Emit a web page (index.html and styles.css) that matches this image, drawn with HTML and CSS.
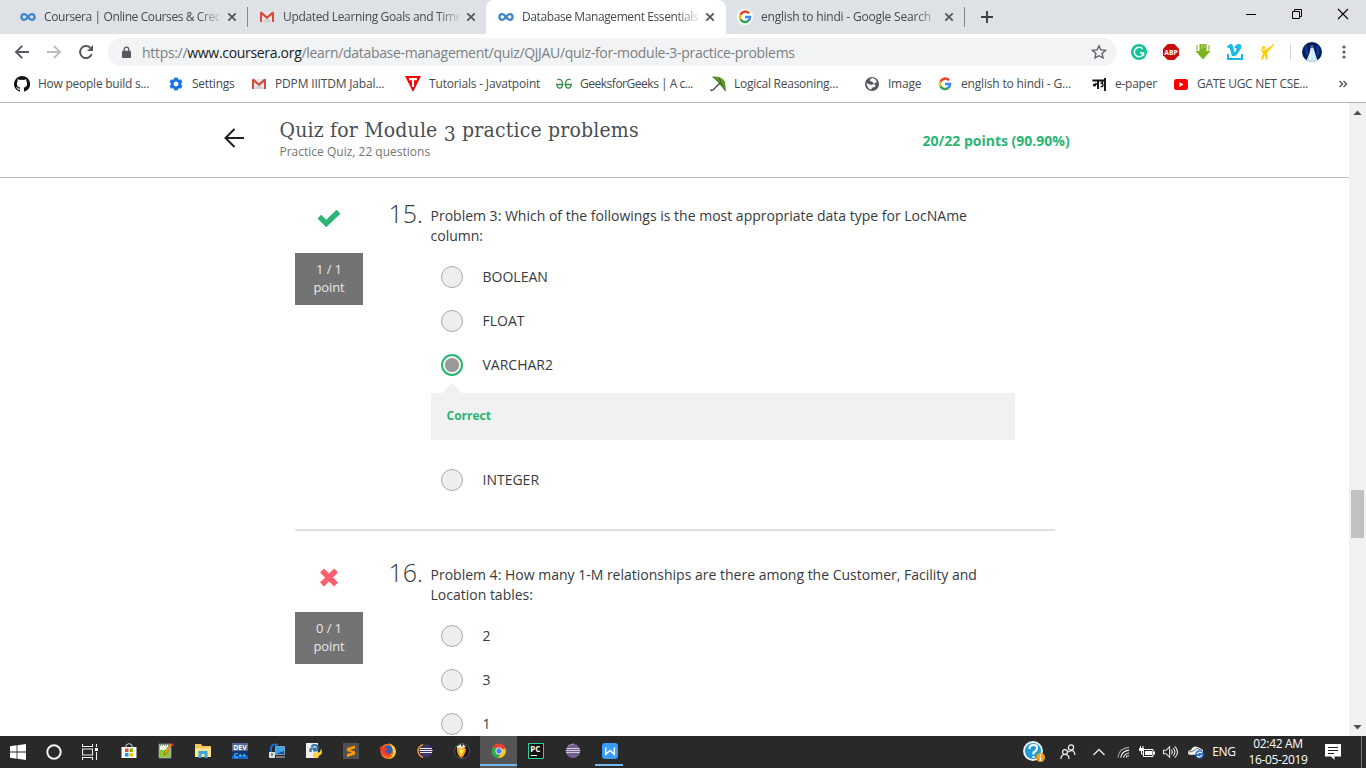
FILE: index.html
```html
<!DOCTYPE html>
<html lang="en">
<head>
<meta charset="utf-8">
<title>Database Management Essentials</title>
<link rel="stylesheet" href="styles.css">
</head>
<body>
<svg class="defs" width="0" height="0">
  <symbol id="coursera" viewBox="0 0 16 16"><path d="M8 8C6.600 6 5.700 5.200 4.200 5.200a2.800 2.800 0 0 0 0 5.600C5.700 10.800 6.600 10 8 8s2.300-2.800 3.800-2.800a2.800 2.800 0 0 1 0 5.600C10.300 10.800 9.400 10 8 8z" fill="none" stroke="#3f87c8" stroke-width="2.300"/></symbol>
  <symbol id="gmail" viewBox="0 0 16 16"><path d="M2 3h12v10H2z" fill="#e9e9e9"/><path d="M3 13l5-5 5 5z" fill="#d2d2d2"/><path d="M1 3.500V13h2V6l5 4 5-4v7h2V3.500L13.500 2.500 8 7.200 2.500 2.500z" fill="#d54b3d"/></symbol>
  <symbol id="google" viewBox="0 0 16 16"><g fill="none" stroke-width="2.500"><path d="M12 4.400A5 5 0 0 0 3.500 5.800" stroke="#ea4335"/><path d="M3.500 5.800a5 5 0 0 0 0 4.400" stroke="#fbbc05"/><path d="M3.500 10.200a5 5 0 0 0 7.800 1.600" stroke="#34a853"/><path d="M8 8.100h5a5 5 0 0 1-1.700 3.700" stroke="#4285f4"/></g></symbol>
  <symbol id="close" viewBox="0 0 16 16"><path d="M4.300 4.300l7.400 7.400m0-7.400l-7.400 7.400" stroke="#50545a" stroke-width="1.700"/></symbol>
</svg>

<header class="tabs">
  <div class="tab"><svg class="i16"><use href="#coursera"/></svg><span class="title">Coursera | Online Courses &amp; Cred</span><svg class="i16 x"><use href="#close"/></svg></div>
  <div class="tab sep"><svg class="i16"><use href="#gmail"/></svg><span class="title t2">Updated Learning Goals and Time</span><svg class="i16 x"><use href="#close"/></svg></div>
  <div class="tab active"><svg class="i16"><use href="#coursera"/></svg><span class="title t3">Database Management Essentials</span><svg class="i16 x"><use href="#close"/></svg></div>
  <div class="tab last"><svg class="i16 disc"><use href="#google"/></svg><span class="title t4">english to hindi - Google Search</span><svg class="i16 x"><use href="#close"/></svg></div>
  <svg class="plus" viewBox="0 0 16 16"><path d="M8 2v12M2 8h12" stroke="#3c4043" stroke-width="1.900"/></svg>
  <div class="window">
    <svg viewBox="0 0 12 12"><path d="M1 6.500h10" stroke="#000"/></svg>
    <svg viewBox="0 0 12 12"><path d="M1.500 3.500h7v7h-7zM3.500 3.500v-2h7v7h-2" fill="none" stroke="#000"/></svg>
    <svg viewBox="0 0 12 12"><path d="M1 1l10 10M11 1L1 11" stroke="#000" stroke-width="1.100"/></svg>
  </div>
</header>

<div class="toolbar">
  <svg class="nav" viewBox="0 0 16 16"><path d="M15 8H2M8.200 1.800L2 8l6.200 6.200" fill="none" stroke="#55595e" stroke-width="1.900"/></svg>
  <svg class="nav" viewBox="0 0 16 16"><path d="M1 8h13M7.800 1.800L14 8l-6.200 6.200" fill="none" stroke="#babcbe" stroke-width="1.900"/></svg>
  <svg class="nav" viewBox="0 0 16 16"><path d="M13.700 10.200A6 6 0 1 1 12.300 3.800" fill="none" stroke="#55595e" stroke-width="2"/><path d="M15 1v6H9z" fill="#55595e"/></svg>
  <div class="omnibox">
    <svg class="lock" viewBox="0 0 10 14"><path d="M1 5h8q1 0 1 1v6q0 1-1 1H1q-1 0-1-1V6q0-1 1-1z" fill="#55595e"/><path d="M2.500 6V3.500a2.500 2.500 0 0 1 5 0V6" fill="none" stroke="#55595e" stroke-width="1.400"/></svg>
    <span class="url">https://<b>www.coursera.org</b>/learn/database-management/quiz/QjJAU/quiz-for-module-3-practice-problems</span>
    <svg class="star" viewBox="0 0 16 16"><path d="M8 1.800l1.900 4.100 4.500.5-3.300 3 .9 4.500L8 11.700l-4 2.200.9-4.500-3.300-3 4.500-.5z" fill="none" stroke="#5f6368" stroke-width="1.400"/></svg>
  </div>
  <div class="extensions">
    <svg viewBox="0 0 16 16"><circle cx="8" cy="8" r="8" fill="#15c39a"/><path d="M11.600 5A4.700 4.700 0 1 0 12.500 9.500M12.500 12V9H9" fill="none" stroke="#fff" stroke-width="1.500"/></svg>
    <svg viewBox="0 0 16 16"><path d="M4.700 0h6.600L16 4.700v6.600L11.300 16H4.700L0 11.300V4.700z" fill="#c70d0d"/><text class="abp" x="8" y="10.600" text-anchor="middle">ABP</text></svg>
    <svg viewBox="0 0 16 16"><path d="M4.500 0v7H.5L8 15.500 15.500 7h-4V0z" fill="#79b51c"/><path d="M2 1v5.500M14 1v5.500M7 0v5M9.500 0v4" stroke="#a8cf54" stroke-width="1.500"/></svg>
    <svg viewBox="0 0 16 16"><path d="M0 2.500L3.300 0Q5.500-.5 6 2.500l1.500 6q3-3.500 1.500-4.500-1 0-2 .6Q8.500 0 12 0q4.500.5 1 6T8 12H5L2.500 3.500 1 4.300zM0 10h2v4h12v-4h2v6H0z" fill="#1ab7ea"/></svg>
    <svg viewBox="0 0 16 16"><circle cx="4.500" cy="3.700" r="1.600" fill="#fc0"/><path d="M1 5l3.500 1.300L8 5l6.500-5 1 .5L9 7.500 8 10l1 5.500H7.500L5.500 11 4 15.500H2L4 9z" fill="#fc0"/></svg>
  </div>
  <div class="profile"><svg viewBox="0 0 20 20"><circle cx="10" cy="10" r="10" fill="#071e60"/><path d="M8.500 6q1.500-3 3 0l1.500 5 2.500 7.500Q10 21.500 4.500 18.300L7.500 11z" fill="#c5e6ff"/><path d="M4 4l1 9M15.500 4l.5 9" stroke="#123fa0" stroke-width="2"/><circle cx="10" cy="4.500" r="1.500" fill="#59637c"/><path d="M9 9l-1 9M11 9l1 9" stroke="#fff"/></svg></div>
  <svg class="menu" viewBox="0 0 4 16"><g fill="#55595e"><circle cx="2" cy="3" r="1.600"/><circle cx="2" cy="8" r="1.600"/><circle cx="2" cy="13" r="1.600"/></g></svg>
</div>

<nav class="bookmarks">
  <div class="bm w154"><svg viewBox="0 0 16 16"><path d="M8 0a8 8 0 0 0-2.500 15.600c.4 0 .5-.2.500-.4v-1.500c-2.200.5-2.700-1-2.700-1-.4-.9-.9-1.200-.9-1.200-.7-.5.1-.5.1-.5.8.1 1.200.8 1.200.8.700 1.200 1.900.9 2.300.7.100-.5.300-.9.500-1.100-1.800-.2-3.600-.9-3.600-4 0-.9.300-1.600.8-2.100 0-.2-.3-1 .1-2.100 0 0 .7-.2 2.200.8a7.500 7.500 0 0 1 4 0c1.500-1 2.200-.8 2.200-.8.400 1.100.2 1.900.1 2.100.5.600.8 1.300.8 2.100 0 3.100-1.900 3.800-3.600 4 .3.300.5.700.5 1.500v2.300c0 .2.100.5.600.4A8 8 0 0 0 8 0z" fill="#111"/></svg><span>How people build s...</span></div>
  <div class="bm w83"><svg viewBox="0 0 16 16"><path d="M8 4.600V1.400M8 14.600v-3.200M2.300 4.700L5 6.200M13.700 11.300L11 9.800M2.300 11.300L5 9.800M13.700 4.700L11 6.200" stroke="#1a73e8" stroke-width="3.400"/><circle cx="8" cy="8" r="3.900" fill="none" stroke="#1a73e8" stroke-width="3"/></svg><span>Settings</span></div>
  <div class="bm w154"><svg><use href="#gmail"/></svg><span class="wide">PDPM IIITDM Jabal...</span></div>
  <div class="bm w151"><svg viewBox="0 0 16 16"><path d="M0 0h16L8 16z" fill="#f40000"/><path d="M4 3.200h8M8 3v8" stroke="#fff" stroke-width="2.200"/></svg><span class="wide">Tutorials - Javatpoint</span></div>
  <div class="bm w154"><svg viewBox="0 0 16 16"><path d="M1.500 3.500Q6.500 2.500 6.500 8q0 4.200-2.800 4.200Q1 12 .8 8.500H7.500M14.500 3.500Q9.500 2.500 9.500 8q0 4.200 2.800 4.200 2.700-.2 2.900-3.700H8.500" fill="none" stroke="#2f8d46" stroke-width="1.300"/></svg><span class="gfg">GeeksforGeeks | A c...</span></div>
  <div class="bm w154"><svg viewBox="0 0 16 16"><path d="M1 1Q11-1 15 6l1 10q-2-2-4-5L9.500 8.500 7 5Q5 2 1 1z" fill="#5c982c"/><path d="M3 1l9 8 3 5M9 2l3 7" stroke="#2b5d19" stroke-width=".7" fill="none"/><path d="M9.500 7.500L3 14l-1.500.5-1-1" fill="none" stroke="#333" stroke-width="1.100"/></svg><span>Logical Reasoning...</span></div>
  <div class="bm w73"><svg viewBox="0 0 16 16"><circle cx="8" cy="8" r="7" fill="#55595e"/><path d="M8.500 2Q5 3 6 5l3 1 .5 2-2 1-3-1-2-1Q3 12 7 13.700l1-2 3-1 .5-2L9 8l4-2-2-3z" fill="#fff"/></svg><span>Image</span></div>
  <div class="bm w154"><svg><use href="#google"/></svg><span class="wide">english to hindi - G...</span></div>
  <div class="bm w82"><svg viewBox="0 0 16 16"><path d="M1.500 4.500h13M7 5v8M14 2v13" stroke="#111" stroke-width="1.900"/><path d="M7 8H4M11.500 5v2H9.500q2.500 0 2.500 2t-2.500 1.500" fill="none" stroke="#111" stroke-width="1.400"/><circle cx="3.500" cy="9" r="1.600" fill="#111"/></svg><span>e-paper</span></div>
  <div class="bm yt"><svg viewBox="0 0 16 16"><rect x="1" y="3" width="14" height="11" rx="2.500" fill="#f00"/><path d="M6.500 6l4 2.500-4 2.500z" fill="#fff"/></svg><span class="tight">GATE UGC NET CSE...</span></div>
  <svg class="more" viewBox="0 0 10 10"><path d="M1.500 2l3 3-3 3M5.500 2l3 3-3 3" fill="none" stroke="#50545a" stroke-width="1.400"/></svg>
</nav>

<div class="viewport">
  <main class="page">
    <div class="quiz-head">
      <svg class="back" viewBox="0 0 20 20"><path d="M20 10H1.500M10.500 1L1.500 10l9 9" fill="none" stroke="#1f1f1f" stroke-width="2"/></svg>
      <div class="heading"><h1>Quiz for Module <span class="oldstyle">3</span> practice problems</h1><p>Practice Quiz, 22 questions</p></div>
      <strong class="score">20/22 points (90.90%)</strong>
    </div>
    <section class="question first">
      <div class="mark"><svg viewBox="0 0 24 20"><path d="M.5 10.500L4.200 6.800l5 5L19.500 1.800l3.900 3.900L9.200 19.200z" fill="#2ab574"/></svg><div class="pts">1 / 1<br>point</div></div>
      <div class="num">15.</div>
      <div class="body">
        <p class="prompt">Problem 3: Which of the followings is the most appropriate data type for LocNAme<br>column:</p>
        <div class="opt"><i></i><span>BOOLEAN</span></div>
        <div class="opt"><i></i><span>FLOAT</span></div>
        <div class="opt"><i class="on"></i><span>VARCHAR2</span></div>
        <div class="feedback">Correct</div>
        <div class="opt"><i></i><span>INTEGER</span></div>
      </div>
    </section>
    <section class="question second">
      <div class="mark"><svg viewBox="0 0 24 20"><path d="M5 3.500l14 14M19 3.500l-14 14" stroke="#ff5f6d" stroke-width="5.600"/></svg><div class="pts">0 / 1<br>point</div></div>
      <div class="num">16.</div>
      <div class="body">
        <p class="prompt">Problem 4: How many 1-M relationships are there among the Customer, Facility and<br>Location tables:</p>
        <div class="opt"><i></i><span>2</span></div>
        <div class="opt"><i></i><span>3</span></div>
        <div class="opt"><i></i><span>1</span></div>
      </div>
    </section>
  </main>
  <aside class="scroll"><svg viewBox="0 0 9 5"><path d="M.5 5L4.500.5l4 4.500z" fill="#505050"/></svg><div class="thumb"></div><svg viewBox="0 0 9 5"><path d="M.5 0l4 4.500 4-4.500z" fill="#505050"/></svg></aside>
</div>

<footer class="taskbar">
  <div class="sys"><svg viewBox="0 0 16 16"><path d="M0 2.200L6.600 1.300v6.200H0zM7.400 1.200L16 0v7.500H7.400zM0 8.500h6.600v6.200L0 13.800zM7.400 8.500H16V16l-8.600-1.200z" fill="#fff"/></svg></div>
  <div class="sys"><svg viewBox="0 0 16 16"><circle cx="8" cy="8" r="6.700" fill="none" stroke="#f1f1f1" stroke-width="2"/></svg></div>
  <div class="sys"><svg viewBox="0 0 16 16"><path d="M.5 0v2.500h10V0M.5 16v-2.500h10V16M.5 5h10v6H.5zM14.500 0v3M14.500 8v8" fill="none" stroke="#eee" stroke-width="1.100"/><path d="M13 4h3v3h-3z" fill="#fff"/></svg></div>
  <div class="apps">
    <div><svg viewBox="0 0 16 16"><path d="M5 5V2q3-3 6 0v3" fill="none" stroke="#ccc"/><path d="M.5 4h15v11h-15z" fill="#fff"/><path d="M4 5.500h3.500V9H4z" fill="#e84e1b"/><path d="M8.500 5.500H12V9H8.500z" fill="#7fba00"/><path d="M4 10h3.500v3.500H4z" fill="#00a4ef"/><path d="M8.500 10H12v3.500H8.500z" fill="#ffb900"/></svg></div>
    <div><svg viewBox="0 0 16 16"><path d="M1 1h12v14H1z" fill="#e9f4df" stroke="#777"/><path d="M2 7h10v7H2z" fill="#8ccb25"/><path d="M2 2h10" stroke="#444" stroke-dasharray="1 1"/><path d="M14.500 1L8 11l-2 1 .5-3 6-8z" fill="#f5b51b" stroke="#77401b" stroke-width=".6"/><path d="M14 0l2 1-1 2-2-1z" fill="#e42424"/></svg></div>
    <div><svg viewBox="0 0 16 16"><path d="M0 1h6l1.500 2H16v11H0z" fill="#f6c758"/><path d="M0 5h16v9H0z" fill="#ffe391"/><path d="M3.500 15V8h9v7h-3v-4h-3v4z" fill="#35a8df"/></svg></div>
    <div><svg viewBox="0 0 16 16"><path d="M0 0h16v16H0z" fill="#163578"/><path d="M0 0h16v8H0z" fill="#536990"/><path d="M0 13h16v3H0z" fill="#1466d0"/><text class="dev" x="8" y="7.300" text-anchor="middle">DEV</text><text class="cpp" x="8" y="14.500" text-anchor="middle">C++</text></svg></div>
    <div><svg viewBox="0 0 16 16"><path d="M2 10V5q1-5 7-3" fill="none" stroke="#1870cc" stroke-width="2"/><path d="M6.500 3.500h9v8h-9z" fill="#144b91" stroke="#7f9fc0"/><path d="M7 4h8v4l-8 3z" fill="#35a5ee"/><path d="M0 9h6v6H0z" fill="#ddd"/><path d="M2 10.500h2v2H2z" fill="#3b8b3b"/><path d="M7 14h9" stroke="#ccc"/></svg></div>
    <div><svg viewBox="0 0 16 16"><path d="M0 0h12v15H0z" fill="#eee"/><path d="M4.500 9V7q0-1.500 1.500-1.500h4M6 4q0-2 2.500-2 3 0 3 2v2q0 1.500-1.500 1.500H7" fill="none" stroke="#3472a6" stroke-width="2.200"/><path d="M14.500 6q1.500.5 1.500 3t-3.500 4v2H9.500q-2.500 0-2.500-2.500 0-3 2-3h3.500q2 0 2-2z" fill="#ffd43b"/></svg></div>
    <div><svg viewBox="0 0 16 16"><path d="M0 0h16v16H0z" fill="#505050"/><path d="M12 2.500v3L7 7l5 1.500v3L4 14v-3l5-1.500L4 8V5z" fill="#ff9800"/></svg></div>
    <div><svg viewBox="0 0 16 16"><circle cx="8" cy="8.300" r="7.600" fill="#ff6921"/><path d="M9 0q7 3 7 9-1 7-8 7 6-3 5-8-1-5-4-8z" fill="#ffd02d"/><circle cx="8" cy="7" r="4.500" fill="#2463c5"/><path d="M0 3q3 2 6 1.500L8 6.500 5.500 8q1 3 5 2-1 4-6 2Q0 11 0 3z" fill="#ee3b2f"/></svg></div>
    <div><svg viewBox="0 0 16 16"><path d="M6 1.500Q1 4 1 8t5 6.500" fill="none" stroke="#f39b2f" stroke-width="1.500"/><circle cx="9" cy="8" r="6.500" fill="#3d3470"/><path d="M3 5.500h12M2.500 7.500h13M3 9.500h12" stroke="#eee"/></svg></div>
    <div><svg viewBox="0 0 16 16"><circle cx="8" cy="8" r="7.500" fill="#181818" stroke="#555"/><path d="M3 4q5-3 9 2-1 7-5 9-5-4-4-11z" fill="#ff9b22"/><path d="M5 6l5 1-3 6z" fill="#fff04b"/><path d="M2 4l5-3 1 5zM9 1l3 3-4 1z" fill="#e8f1d7"/></svg></div>
    <div class="current"><svg viewBox="0 0 16 16"><circle cx="8" cy="8" r="7" fill="#fbc116"/><path d="M8 8L2 4a7 7 0 0 1 12.500 1z" fill="#e34133"/><path d="M8 8L2 4a7 7 0 0 0 5 11l4-6z" fill="#2da94f"/><circle cx="8" cy="8" r="3.500" fill="#fff"/><circle cx="8" cy="8" r="2.700" fill="#4285f4"/></svg></div>
    <div><svg viewBox="0 0 16 16"><path d="M.5.500h15v15H.5z" fill="#111" stroke="#25d790"/><text class="pc" x="2.300" y="8.900">PC</text><path d="M3 12.500h6" stroke="#fff"/></svg></div>
    <div><svg viewBox="0 0 16 16"><circle cx="8" cy="8" r="7.200" fill="#735f8e"/><path d="M1.500 5.500h13M.8 7.500h14.400M1.200 9.500h13.600" stroke="#d7cbe3"/><path d="M3 3q3-2 6-2" stroke="#a997be" fill="none"/></svg></div>
    <div class="open"><svg viewBox="0 0 16 16"><rect width="16" height="16" rx="3" fill="#3a9dfa"/><path d="M3.700 4.500v6.800L8 7.500l4.300 3.800V4.500" fill="none" stroke="#fff" stroke-width="1.500"/></svg></div>
  </div>
  <div class="tray">
    <div class="help"><svg viewBox="0 0 22 22"><circle cx="10" cy="10" r="9" fill="#1b9bd7" stroke="#eee" stroke-width="2"/><path d="M6.500 8q0-4 4-4t3.500 3.500q0 2-3.500 4v2M10.500 15v2" fill="none" stroke="#fff" stroke-width="2.200"/><circle cx="17.500" cy="16.500" r="4.500" fill="#f39c1b"/><path d="M17.500 13.500v1.500M17.500 16v4" stroke="#fff" stroke-width="1.300"/></svg></div>
    <div class="people"><svg viewBox="0 0 16 16"><g fill="none" stroke="#f4f4f4" stroke-width="1.200"><circle cx="5" cy="8" r="2.400"/><circle cx="11" cy="3.500" r="2.600"/><path d="M1 15q0-4.500 4-4.500T9 15M8 8q6-4 7 3"/></g></svg></div>
    <div class="chev"><svg viewBox="0 0 12 12"><path d="M.5 9L6 3.500 11.500 9" fill="none" stroke="#eee" stroke-width="1.300"/></svg></div>
    <div class="wifi"><svg viewBox="0 0 14 14"><g fill="none" stroke="#eee" stroke-width="1.200"><path d="M1 13Q2 3 13 2" opacity=".6"/><path d="M4 13q1-7 9-8M7 13q1-4 6-5M10 13q0-2 3-2"/></g></svg></div>
    <div class="batt"><svg viewBox="0 0 16 14"><path d="M4.500 4.500H14v7H4.500z" fill="none" stroke="#fff"/><path d="M6 6h7v4H6zM14 6.500h2v3h-2zM0 3h5v3H0z" fill="#fff"/><path d="M1.500 1v3M4 1v3M2.500 6v3h2" stroke="#fff" fill="none"/></svg></div>
    <div class="vol"><svg viewBox="0 0 18 16"><path d="M1 6v4h3l4 4V2L4 6z" fill="none" stroke="#eee" stroke-width="1.200"/><path d="M10 5.500q2 2.500 0 5M12 3.500q4 4.500 0 9M14 1.500q6 6.500 0 13" fill="none" stroke="#eee" stroke-width="1.200"/></svg></div>
    <div class="cloud"><svg viewBox="0 0 16 14"><path d="M3 10Q0 10 0 7.500T3 5q2-5 7-3l5 3v4z" fill="#eee"/><path d="M1 7q7-1 8-4l5 3" fill="none" stroke="#777"/><circle cx="11.500" cy="9.500" r="4.300" fill="#2b70cd"/><path d="M9 9q2-3 5-1M14 10q-2 3-5 1" fill="none" stroke="#fff" stroke-width="1.200"/></svg></div>
    <div class="lang">ENG</div>
    <div class="clock"><span>02:42 AM</span><span>16-05-2019</span></div>
    <div class="notif"><svg viewBox="0 0 16 16"><path d="M0 0h16v12.500H9.500V16L6 12.500H0z" fill="#fff"/><path d="M3 3.500h10M3 6.500h10M3 9.500h6" stroke="#222"/></svg></div>
    <div class="desk"></div>
  </div>
</footer>
</body>
</html>
```
FILE: styles.css
```css
* { box-sizing: border-box; }
body { margin: 0; width: 1366px; height: 768px; overflow: hidden; background: #fff; font-family: "Open Sans", "Noto Sans", sans-serif; display: flex; flex-direction: column; }
svg { display: block; flex: none; }
.defs { position: absolute; }
h1, p { margin: 0; }

/* tab strip */
.tabs { flex: none; height: 34px; background: #dee1e6; display: flex; padding-left: 8px; font-size: 12px; color: #45494e; }
.tab { width: 239px; height: 34px; display: flex; align-items: center; padding: 0 7px 0 12px; }
.tab.sep, .tab.last { background: linear-gradient(#85888c, #85888c) no-repeat 0 7px / 1px 20px; }
.tab.last { background-position: 238px 7px; padding-left: 11px; padding-right: 8px; }
.tab.active { width: 240px; background: #fff; border-radius: 8px 8px 0 0; padding-right: 8px; }
.i16 { width: 16px; height: 16px; }
.disc { background: #fff; border-radius: 50%; }
.title { flex: 1; min-width: 0; margin-left: 8px; white-space: nowrap; letter-spacing: -.4px; line-height: 18px; -webkit-mask-image: linear-gradient(90deg, #000 154px, transparent 180px); mask-image: linear-gradient(90deg, #000 154px, transparent 180px); }
.t2 { letter-spacing: -.35px; }
.t4 { letter-spacing: -.2px; }
.x { margin-left: 4px; }
.plus { width: 16px; height: 16px; margin: 9px 0 0 14px; }
.window { margin-left: auto; display: flex; gap: 34px; padding: 8px 17px 0 0; }
.window svg { width: 12px; height: 12px; }

/* address row */
.toolbar { flex: none; height: 36px; display: flex; align-items: center; padding-left: 14px; }
.nav { width: 16px; height: 16px; margin-right: 16px; }
.omnibox { width: 1009px; height: 28px; margin-left: -2px; border-radius: 14px; background: #f1f3f4; display: flex; align-items: center; padding: 0 10px 0 14px; }
.lock { width: 9px; height: 13px; }
.url { margin-left: 11px; flex: 1; font-size: 14px; letter-spacing: -.31px; color: #7b7f84; white-space: nowrap; }
.url b { font-weight: 400; color: #202124; }
.star { width: 16px; height: 16px; }
.extensions { display: flex; gap: 16px; margin-left: 14px; }
.extensions svg { width: 16px; height: 16px; }
.abp { font: bold 6.800px "Open Sans", sans-serif; fill: #fff; }
.profile { margin-left: 15px; padding-left: 12px; background: linear-gradient(#cfd1d4, #cfd1d4) no-repeat 0 2px / 1px 16px; }
.profile svg { width: 20px; height: 20px; }
.menu { width: 4px; height: 16px; margin-left: 20px; }

/* bookmarks */
.bookmarks { flex: none; height: 33px; border-bottom: 1px solid #b6b4b6; padding: 0 0 5px 14px; display: flex; align-items: center; font-size: 12px; color: #45494e; }
.bm { display: flex; align-items: center; gap: 8px; white-space: nowrap; letter-spacing: -.25px; flex: none; }
.bm svg { width: 16px; height: 16px; }
.wide { letter-spacing: -.17px; }
.tight { letter-spacing: -.3px; }
.gfg { letter-spacing: -.48px; }
.w154 { width: 154px; } .w83 { width: 83px; } .w151 { width: 151px; } .w73 { width: 73px; } .w82 { width: 82px; } .yt { width: 165px; }
.more { width: 10px; height: 10px; }

/* page */
.viewport { flex: none; height: 633px; display: flex; overflow: hidden; }
.page { width: 1349px; height: 633px; overflow: hidden; color: #373a3c; }
.quiz-head { height: 75px; border-bottom: 1px solid #bdbdbd; display: flex; padding-left: 223.5px; }
.back { width: 20px; height: 20px; margin-top: 25px; }
.heading { margin-left: 36px; width: 643px; padding-top: 12px; }
h1 { font: 400 21px/30px "DejaVu Serif Condensed", "DejaVu Serif", serif; letter-spacing: .18px; color: #4a4e52; white-space: nowrap; }
.oldstyle { display: inline-block; transform: translateY(4px); }
.heading p { margin-top: -1px; font-size: 12px; line-height: 15px; color: #757575; }
.score { font-size: 14px; line-height: 20px; margin-top: 28px; color: #2ab574; }
.question { margin-left: 295px; width: 760px; display: flex; }
.first { padding-top: 27px; height: 353px; border-bottom: 2px solid #e1e1e1; }
.second { padding-top: 33px; }
.mark { width: 68px; }
.mark svg { width: 24px; height: 20px; margin: 3px auto 0 22px; }
.pts { margin-top: 25px; height: 52px; background: #737373; color: #e8e8e8; font-size: 13px; line-height: 18px; text-align: center; padding-top: 7px; letter-spacing: -.1px; }
.num { width: 67.500px; padding-left: 25.500px; font-size: 25px; font-weight: 300; line-height: 17px; color: #373a3c; }
.body { width: 584.500px; }
.prompt { font-size: 14px; line-height: 20px; padding-top: 1px; white-space: nowrap; }
.opt { height: 44px; padding-left: 10.500px; display: flex; align-items: center; gap: 19.500px; font-size: 14px; }
.opt span { line-height: 20px; }
.prompt + .opt { margin-top: 9px; }
.opt i { width: 22px; height: 22px; border: 1px solid #aaa; border-radius: 50%; background: #eee; }
.opt i.on { border: 2px solid #2ab574; background: radial-gradient(circle, #999 0 6.500px, #f3f3f3 7.500px); }
.feedback { position: relative; height: 47px; margin: 6px 0 18px .5px; background: #f1f1f1; padding: 13px 15.500px; font-size: 12px; font-weight: 700; line-height: 19px; color: #2ab574; }
.feedback::before { content: ""; position: absolute; left: 11px; top: -10px; border: 10px solid transparent; border-top: 0; border-bottom-color: #f1f1f1; }
.scroll { width: 17px; background: #f1f1f1; display: flex; flex-direction: column; align-items: center; padding: 7px 0 6px; }
.scroll svg { width: 9px; height: 5px; }
.thumb { width: 13px; height: 48px; background: #c1c1c1; margin: 375px 0 auto; }

/* taskbar */
.taskbar { flex: none; height: 32px; background: #292929; display: flex; color: #fff; }
.sys, .apps > div, .tray > div { display: flex; align-items: center; justify-content: center; height: 32px; padding-bottom: 1px; }
.sys { width: 36px; }
.sys svg, .apps svg { width: 16px; height: 16px; }
.apps { display: flex; margin-left: 2px; }
.apps > div { width: 37px; padding-bottom: 2px; }
.apps .current { background: linear-gradient(#73b9f0, #73b9f0) no-repeat 0 28px / 37px 2px, #555; }
.apps .open { background: linear-gradient(#73b9f0, #73b9f0) no-repeat 4px 28px / 28px 2px; }
.dev, .cpp { font: bold 7px "Open Sans", sans-serif; fill: #fff; }
.cpp { fill: #4bc1ff; }
.pc { font: bold 8px "Open Sans", sans-serif; fill: #fff; }
.tray { display: flex; margin-left: auto; }
.help { width: 30px; } .help svg { width: 22px; height: 22px; }
.people { width: 38px; } .people svg { width: 16px; height: 16px; }
.chev { width: 24px; } .chev svg { width: 12px; height: 12px; }
.wifi { width: 25px; } .wifi svg { width: 13px; height: 14px; }
.batt { width: 21px; } .batt svg { width: 16px; height: 14px; }
.vol { width: 27px; } .vol svg { width: 17px; height: 14px; }
.cloud { width: 23px; } .cloud svg { width: 16px; height: 14px; }
.lang { width: 34px; font-size: 12px; letter-spacing: -.35px; }
.tray .clock { width: 74px; margin-right: -2px; flex-direction: column; font-size: 12px; line-height: 16px; letter-spacing: -.35px; }
.notif { width: 40px; } .notif svg { width: 16px; height: 16px; }
.desk { width: 13px; background: linear-gradient(#777, #777) no-repeat 8px 0 / 1px 32px; }
```
